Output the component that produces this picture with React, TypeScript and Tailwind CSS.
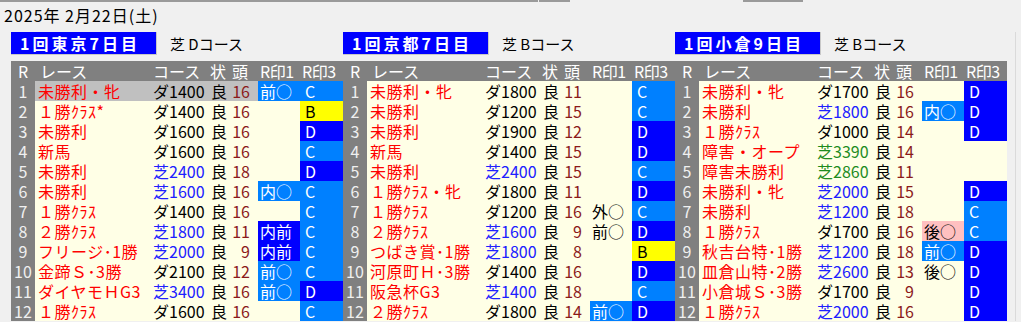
import React from 'react';

type Mark = { text: string; tone: 'light' | 'dark' | 'yellow' | 'pink' | 'none' } | null;

interface Race {
  no: number;
  name: string;
  course: string;
  surface: 'dirt' | 'turf' | 'jump';
  cond: string;
  heads: number;
  r1: Mark;
  r3: Mark;
}

interface Meeting {
  title: string;
  note: string;
  selected?: number;
  races: Race[];
}

const L = (text: string): Mark => ({ text, tone: 'light' });
const D = (text: string): Mark => ({ text, tone: 'dark' });
const Y = (text: string): Mark => ({ text, tone: 'yellow' });
const P = (text: string): Mark => ({ text, tone: 'pink' });
const N = (text: string): Mark => ({ text, tone: 'none' });

const r = (
  no: number,
  name: string,
  course: string,
  heads: number,
  r1: Mark,
  r3: Mark,
): Race => ({
  no,
  name,
  course,
  surface: course.startsWith('ダ') ? 'dirt' : 'turf',
  cond: '良',
  heads,
  r1,
  r3,
});

const meetings: Meeting[] = [
  {
    title: '1回東京7日目',
    note: '芝 Dコース',
    selected: 1,
    races: [
      r(1, '未勝利・牝', 'ダ1400', 16, L('前○'), L('C')),
      r(2, '１勝ｸﾗｽ*', 'ダ1400', 16, null, Y('B')),
      r(3, '未勝利', 'ダ1600', 16, null, D('D')),
      r(4, '新馬', 'ダ1600', 16, null, L('C')),
      r(5, '未勝利', '芝2400', 18, null, D('D')),
      r(6, '未勝利', '芝1600', 16, L('内○'), L('C')),
      r(7, '１勝ｸﾗｽ', 'ダ1400', 16, null, L('C')),
      r(8, '２勝ｸﾗｽ', '芝1800', 11, D('内前'), L('C')),
      r(9, 'フリージ･1勝', '芝2000', 9, D('内前'), L('C')),
      r(10, '金蹄Ｓ･3勝', 'ダ2100', 12, L('前○'), L('C')),
      r(11, 'ダイヤモＨG3', '芝3400', 16, L('前○'), D('D')),
      r(12, '１勝ｸﾗｽ', 'ダ1600', 16, null, L('C')),
    ],
  },
  {
    title: '1回京都7日目',
    note: '芝 Bコース',
    races: [
      r(1, '未勝利・牝', 'ダ1800', 11, null, L('C')),
      r(2, '未勝利', 'ダ1200', 15, null, L('C')),
      r(3, '未勝利', 'ダ1900', 12, null, D('D')),
      r(4, '新馬', 'ダ1400', 15, null, D('D')),
      r(5, '未勝利', '芝2400', 15, null, L('C')),
      r(6, '１勝ｸﾗｽ・牝', 'ダ1800', 11, null, D('D')),
      r(7, '１勝ｸﾗｽ', 'ダ1200', 16, N('外○'), L('C')),
      r(8, '２勝ｸﾗｽ', '芝1600', 9, N('前○'), D('D')),
      r(9, 'つばき賞･1勝', '芝1800', 8, null, Y('B')),
      r(10, '河原町Ｈ･3勝', 'ダ1400', 16, null, D('D')),
      r(11, '阪急杯G3', '芝1400', 18, null, L('C')),
      r(12, '２勝ｸﾗｽ', 'ダ1800', 14, L('前○'), D('D')),
    ],
  },
  {
    title: '1回小倉9日目',
    note: '芝 Bコース',
    races: [
      r(1, '未勝利・牝', 'ダ1700', 16, null, D('D')),
      r(2, '未勝利', '芝1800', 16, L('内○'), D('D')),
      r(3, '１勝ｸﾗｽ', 'ダ1000', 14, null, D('D')),
      { ...r(4, '障害・オープ', '芝3390', 14, null, null), surface: 'jump' },
      { ...r(5, '障害未勝利', '芝2860', 11, null, null), surface: 'jump' },
      r(6, '未勝利・牝', '芝2000', 15, null, D('D')),
      r(7, '未勝利', '芝1200', 18, null, L('C')),
      r(8, '１勝ｸﾗｽ', 'ダ1700', 16, P('後○'), L('C')),
      r(9, '秋吉台特･1勝', '芝1200', 18, L('前○'), D('D')),
      r(10, '皿倉山特･2勝', '芝2600', 13, N('後○'), D('D')),
      r(11, '小倉城Ｓ･3勝', 'ダ1700', 9, null, D('D')),
      r(12, '１勝ｸﾗｽ', '芝2000', 16, null, D('D')),
    ],
  },
];

const cols = 'grid grid-cols-[24px_115px_57px_21px_30px_42px_43px]';

function markClass(m: Mark) {
  if (!m) return 'bg-[#ffffe6]';
  switch (m.tone) {
    case 'light':
      return 'bg-[#0080ff] text-white';
    case 'dark':
      return 'bg-[#0000ff] text-white';
    case 'yellow':
      return 'bg-[#ffff00] text-black';
    case 'pink':
      return 'bg-[#ffc0c0] text-black';
    default:
      return 'bg-[#ffffe6] text-black';
  }
}

function courseColor(s: Race['surface']) {
  if (s === 'turf') return 'text-[#2020ff]';
  if (s === 'jump') return 'text-[#1e8c1e]';
  return 'text-black';
}

function RaceTable({ meeting }: { meeting: Meeting }) {
  return (
    <div className="w-[332px] flex flex-col">
      {/* Meeting title */}
      <div className="flex items-center h-[23px]">
        <div className="w-[146px] h-[23px] bg-[#0000ff] border-r border-b border-[#c8c8c8] text-white font-bold text-[16px] leading-[22px] tracking-[3px] pl-[9px]">
          {meeting.title}
        </div>
        <span className="ml-[13px] text-[15px] leading-[23px] text-black">{meeting.note}</span>
      </div>

      {/* Column header */}
      <div className={`${cols} mt-[6px] h-[20px] bg-[#808080] text-white text-[16px] leading-[20px]`}>
        <div className="text-center">R</div>
        <div className="pl-[5px]">レース</div>
        <div className="pl-[3px]">コース</div>
        <div className="pl-[3px]">状</div>
        <div className="pl-[4px]">頭</div>
        <div className="pl-[2px] tracking-[-0.5px]">R印1</div>
        <div className="pl-[2px] tracking-[-0.5px]">R印3</div>
      </div>

      {/* Rows */}
      {meeting.races.map((race) => {
        const sel = meeting.selected === race.no;
        const rowBg = sel ? 'bg-[#c0c0c0]' : 'bg-[#ffffe6]';
        return (
          <div key={race.no} className={`${cols} h-[20px] text-[16px] leading-[20px] whitespace-nowrap`}>
            <div className="bg-[#808080] text-[#f0f0f0] text-center">{race.no}</div>
            <div className={`${rowBg} text-[#ff0000] pl-[3px] tracking-[0.5px]`}>{race.name}</div>
            <div className={`${rowBg} ${courseColor(race.surface)} pl-[3px]`}>{race.course}</div>
            <div className={`${rowBg} text-black pl-[4px]`}>{race.cond}</div>
            <div className={`${rowBg} text-[#8b1a1a] text-right pr-[8px]`}>{race.heads}</div>
            <div className={`${markClass(race.r1)} pl-[2px]`}>{race.r1?.text}</div>
            <div className={`${markClass(race.r3)} pl-[5px]`}>{race.r3?.text}</div>
          </div>
        );
      })}
    </div>
  );
}

export default function App() {
  return (
    <div
      className="w-[1021px] h-[322px] bg-[#f0f0f0] overflow-hidden flex flex-col"
      style={{ fontFamily: '"Noto Sans CJK JP", "Noto Sans", sans-serif' }}
    >
      {/* Bottom edges of controls above */}
      <div className="flex h-[2px]">
        <div className="w-[538px] bg-[#9a9a9a]" />
        <div className="w-[1px]" />
        <div className="w-[31px] bg-[#9a9a9a]" />
        <div className="w-[173px]" />
        <div className="w-[60px] bg-[#9a9a9a]" />
      </div>

      <div className="mt-[3px] h-[20px] pl-[4px] text-[16px] leading-[20px] tracking-[1px] text-black">
        2025年 2月22日(土)
      </div>

      <div className="flex mt-[7px] pl-[11px]">
        {meetings.map((m) => (
          <RaceTable key={m.title} meeting={m} />
        ))}
        <div className="ml-[8px] w-[1px] bg-[#dadada]" />
      </div>
    </div>
  );
}
